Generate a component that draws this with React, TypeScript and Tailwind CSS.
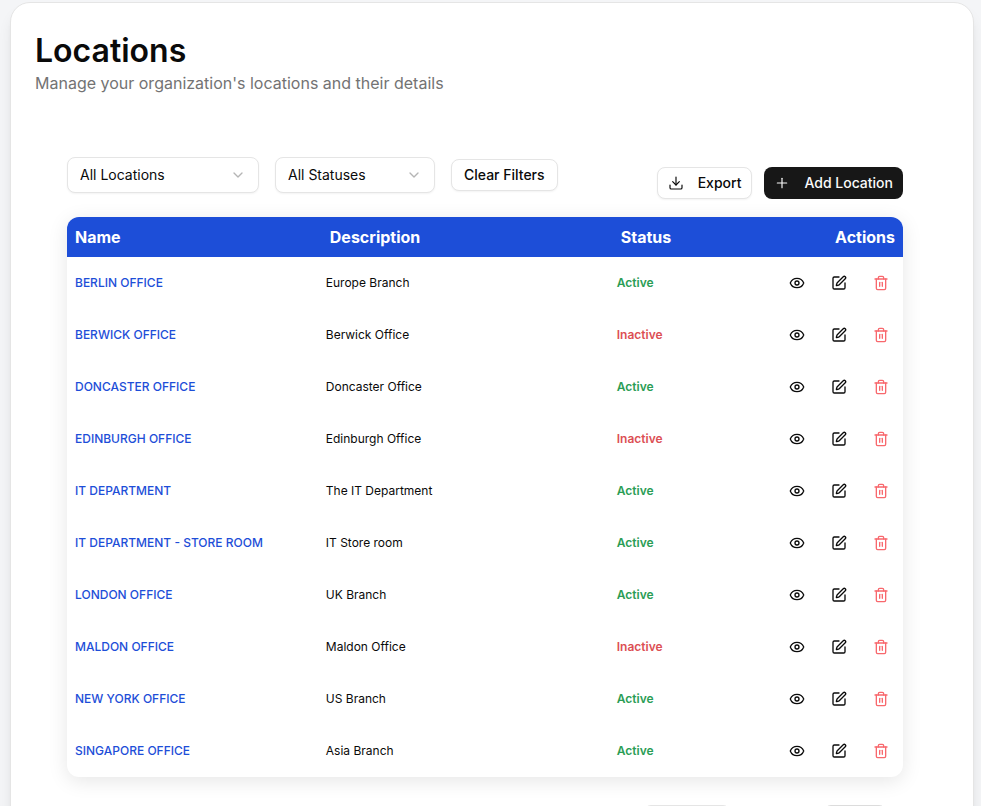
import { ChevronDown, Download, Eye, Plus, SquarePen, Trash2 } from "lucide-react";

type Status = "Active" | "Inactive";

const locations: { name: string; description: string; status: Status }[] = [
  { name: "BERLIN OFFICE", description: "Europe Branch", status: "Active" },
  { name: "BERWICK OFFICE", description: "Berwick Office", status: "Inactive" },
  { name: "DONCASTER OFFICE", description: "Doncaster Office", status: "Active" },
  { name: "EDINBURGH OFFICE", description: "Edinburgh Office", status: "Inactive" },
  { name: "IT DEPARTMENT", description: "The IT Department", status: "Active" },
  { name: "IT DEPARTMENT - STORE ROOM", description: "IT Store room", status: "Active" },
  { name: "LONDON OFFICE", description: "UK Branch", status: "Active" },
  { name: "MALDON OFFICE", description: "Maldon Office", status: "Inactive" },
  { name: "NEW YORK OFFICE", description: "US Branch", status: "Active" },
  { name: "SINGAPORE OFFICE", description: "Asia Branch", status: "Active" },
];

function FilterSelect({ label, option, width }: { label: string; option: string; width: string }) {
  return (
    <div className={"relative " + width}>
      <select
        aria-label={label}
        className="h-9 w-full appearance-none rounded-lg border border-[#e5e5e5] bg-white pl-3 pr-9 text-sm text-[#0a0a0a] shadow-xs"
      >
        <option>{option}</option>
      </select>
      <ChevronDown
        size={16}
        strokeWidth={2}
        className="pointer-events-none absolute right-[13px] top-[10px] text-[#b5b5b5]"
      />
    </div>
  );
}

const iconButton = "flex h-7 w-7 items-center justify-center rounded-md";

export default function App() {
  return (
    <div className="h-screen overflow-hidden bg-[#f4f5f7] pl-[10px] pr-[7px] pt-[2px] font-['Inter',sans-serif] text-[#0a0a0a]">
      <main className="min-h-full rounded-[20px] border border-[#e5e5e5] bg-white px-6 pb-10 pt-7 shadow-lg">
        <header>
          <h1 className="text-[32px] font-semibold leading-10">Locations</h1>
          <p className="leading-6 text-[#737373]">Manage your organization's locations and their details</p>
        </header>

        <section className="pl-8 pr-[46px] pt-[62px]">
          <div className="mb-2 flex items-center justify-between">
            <div className="mb-4 flex items-center gap-4">
              <FilterSelect label="Location" option="All Locations" width="w-48" />
              <FilterSelect label="Status" option="All Statuses" width="w-40" />
              <button className="h-8 rounded-lg border border-[#e5e5e5] bg-white px-3 text-sm font-medium shadow-xs">
                Clear Filters
              </button>
            </div>
            <div className="flex items-center gap-3">
              <button className="flex h-8 items-center gap-[14px] rounded-lg border border-[#e5e5e5] bg-white px-[10px] text-sm font-medium shadow-xs">
                <Download size={16} strokeWidth={1.75} />
                Export
              </button>
              <button className="flex h-8 items-center gap-[14px] rounded-lg bg-[#171717] px-[10px] text-sm font-medium text-[#fafafa]">
                <Plus size={16} strokeWidth={1.75} />
                Add Location
              </button>
            </div>
          </div>

          <div className="overflow-hidden rounded-xl bg-white shadow-[0_4px_20px_rgba(0,0,0,0.1)]">
            <table className="w-full table-fixed border-collapse text-left">
              <thead className="bg-[#1d4ed8] text-white">
                <tr className="h-10">
                  <th className="w-[30%] pl-2 font-bold">Name</th>
                  <th className="w-[291px] pl-3 font-bold">Description</th>
                  <th className="pl-3 font-bold">Status</th>
                  <th className="pr-2 text-right font-bold">Actions</th>
                </tr>
              </thead>
              <tbody className="text-xs">
                {locations.map((l) => (
                  <tr key={l.name} className="h-[52px]">
                    <td className="whitespace-nowrap pl-2 font-medium text-[#1d4ed8]">{l.name}</td>
                    <td className="pl-2">{l.description}</td>
                    <td
                      className={
                        l.status === "Active"
                          ? "pl-2 font-semibold text-[#2a9d55]"
                          : "pl-2 font-semibold text-[#dc4f54]"
                      }
                    >
                      {l.status}
                    </td>
                    <td className="pr-2">
                      <div className="flex justify-end gap-[14px]">
                        <button className={iconButton} aria-label={"View " + l.name}>
                          <Eye size={16} />
                        </button>
                        <button className={iconButton} aria-label={"Edit " + l.name}>
                          <SquarePen size={16} />
                        </button>
                        <button className={iconButton + " text-[#f8686d]"} aria-label={"Delete " + l.name}>
                          <Trash2 size={16} />
                        </button>
                      </div>
                    </td>
                  </tr>
                ))}
              </tbody>
            </table>
          </div>

          <nav aria-label="Pagination" className="flex justify-end gap-[92px] pr-4 pt-7">
            <button aria-label="Previous page" className="h-8 w-[88px] rounded-lg border border-[#e5e5e5]" />
            <button aria-label="Next page" className="h-8 w-16 rounded-lg border border-[#dcdcdc]" />
          </nav>
        </section>
      </main>
    </div>
  );
}
